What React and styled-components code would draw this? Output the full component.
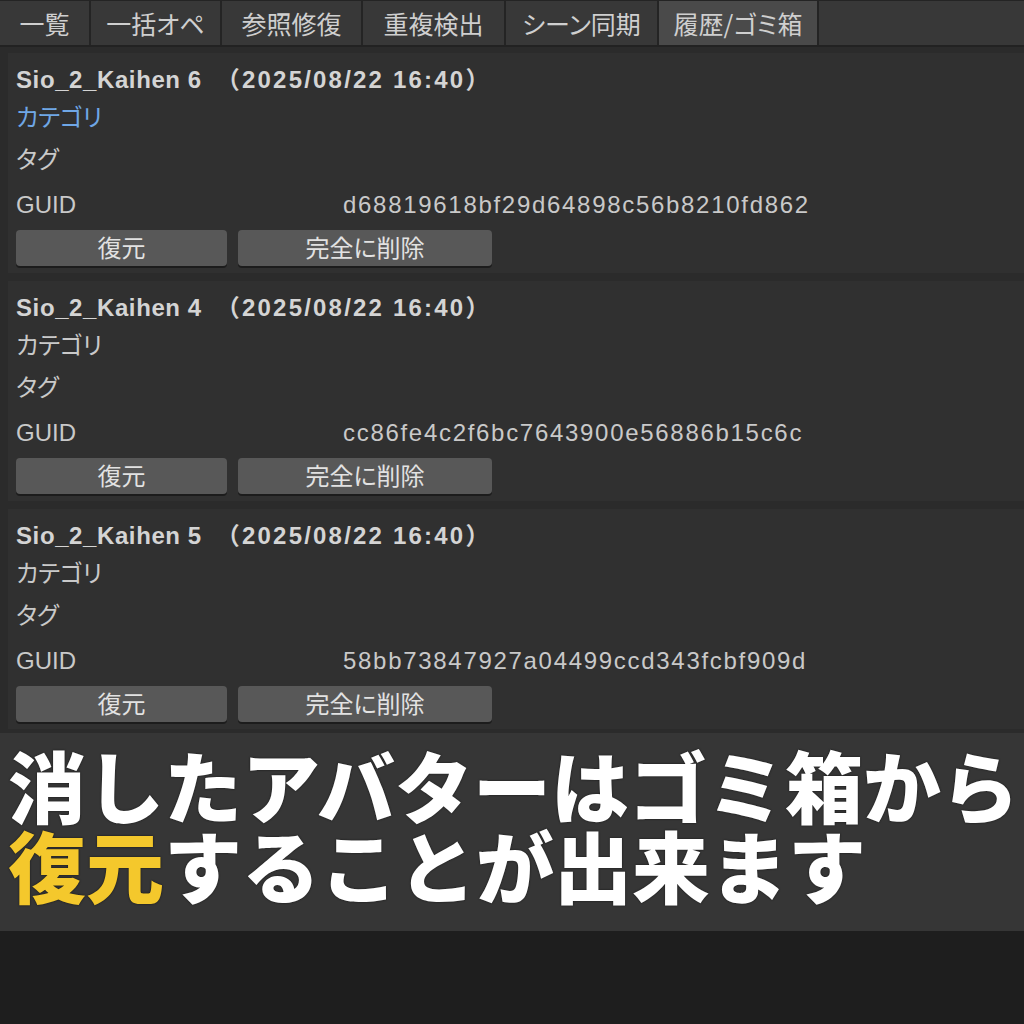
import styled, { createGlobalStyle } from "styled-components";

const GlobalStyle = createGlobalStyle`
  html, body {
    margin: 0;
    padding: 0;
    background: #1e1e1e;
  }
  body {
    font-family: "Liberation Sans", "Noto Sans CJK JP", sans-serif;
    font-feature-settings: "palt";
  }
`;

const Page = styled.div`
  width: 1024px;
  background: #2b2b2b;
`;

const TabBar = styled.div`
  display: flex;
  background: #383838;
  border-top: 1px solid #242424;
  border-bottom: 2px solid #222;
  box-sizing: border-box;
  height: 47px;
`;

const Tab = styled.div`
  display: flex;
  align-items: center;
  justify-content: center;
  width: ${(p) => p.$w}px;
  box-sizing: border-box;
  border-right: 2px solid #242424;
  background: ${(p) => (p.$active ? "#4a4a4a" : "#383838")};
  color: #cfcfcf;
  font-size: 25px;
  font-family: "Noto Sans CJK JP", sans-serif;
`;

const List = styled.div`
  display: flex;
  flex-direction: column;
  gap: 8px;
  padding: 6px 0 0 8px;
`;

const Card = styled.div`
  background: #303030;
  padding: 0 0 7px 8px;
  display: flex;
  flex-direction: column;
`;

const Title = styled.div`
  margin-top: 9px;
  line-height: 36px;
  font-size: 24px;
  font-weight: 700;
  color: #d4d4d4;
  white-space: pre;
  letter-spacing: 0.6px;
  font-feature-settings: normal;
`;

const Stamp = styled.span`
  margin-left: 14px;
  letter-spacing: 2.2px;
`;

const Field = styled.div`
  display: grid;
  grid-template-columns: 327px 1fr;
  line-height: ${(p) => p.$h}px;
  font-size: 24px;
  color: ${(p) => (p.$accent ? "#6fa7e6" : "#c9c9c9")};
`;

const Value = styled.span`
  letter-spacing: 1.7px;
`;

const Buttons = styled.div`
  display: flex;
  gap: 11px;
  margin-top: 2px;
`;

const Button = styled.div`
  width: ${(p) => p.$w}px;
  height: 36px;
  display: flex;
  align-items: center;
  justify-content: center;
  background: #585858;
  border-radius: 4px;
  box-shadow: 0 2px 0 #1c1c1c;
  color: #e2e2e2;
  font-size: 24px;
  line-height: 1;
  padding-bottom: 3px;
  box-sizing: border-box;
  font-family: "Noto Sans CJK JP", sans-serif;
`;

const Caption = styled.div`
  background: #363636;
  margin-top: 4px;
  padding: 11px 0 27px 8px;
  font-family: "Noto Sans CJK JP", sans-serif;
  font-weight: 900;
  font-size: 78px;
  line-height: 80px;
  color: #ffffff;
  font-feature-settings: normal;
  text-shadow: 0 0 2px #111;
`;

const Highlight = styled.span`
  color: #f4c82c;
`;

const tabs = [
  { label: "一覧", w: 91 },
  { label: "一括オペ", w: 131 },
  { label: "参照修復", w: 141 },
  { label: "重複検出", w: 143 },
  { label: "シーン同期", w: 153 },
  { label: "履歴/ゴミ箱", w: 160, active: true },
];

const items = [
  { name: "Sio_2_Kaihen 6", guid: "d68819618bf29d64898c56b8210fd862", accent: true },
  { name: "Sio_2_Kaihen 4", guid: "cc86fe4c2f6bc7643900e56886b15c6c" },
  { name: "Sio_2_Kaihen 5", guid: "58bb73847927a04499ccd343fcbf909d" },
];

const TrashItem = ({ item }) => (
  <Card>
    <Title>
      {item.name}
      <Stamp>（2025/08/22 16:40）</Stamp>
    </Title>
    <Field $h={40} $accent={item.accent}>
      <span>カテゴリ</span>
    </Field>
    <Field $h={44}>
      <span>タグ</span>
    </Field>
    <Field $h={46}>
      <span>GUID</span>
      <Value>{item.guid}</Value>
    </Field>
    <Buttons>
      <Button $w={211}>復元</Button>
      <Button $w={254}>完全に削除</Button>
    </Buttons>
  </Card>
);

export default function App() {
  return (
    <>
      <GlobalStyle />
      <Page>
        <TabBar>
          {tabs.map((t) => (
            <Tab key={t.label} $w={t.w} $active={t.active}>
              {t.label}
            </Tab>
          ))}
        </TabBar>
        <List>
          {items.map((item) => (
            <TrashItem key={item.guid} item={item} />
          ))}
        </List>
        <Caption>
          消したアバターはゴミ箱から
          <br />
          <Highlight>復元</Highlight>することが出来ます
        </Caption>
      </Page>
    </>
  );
}
